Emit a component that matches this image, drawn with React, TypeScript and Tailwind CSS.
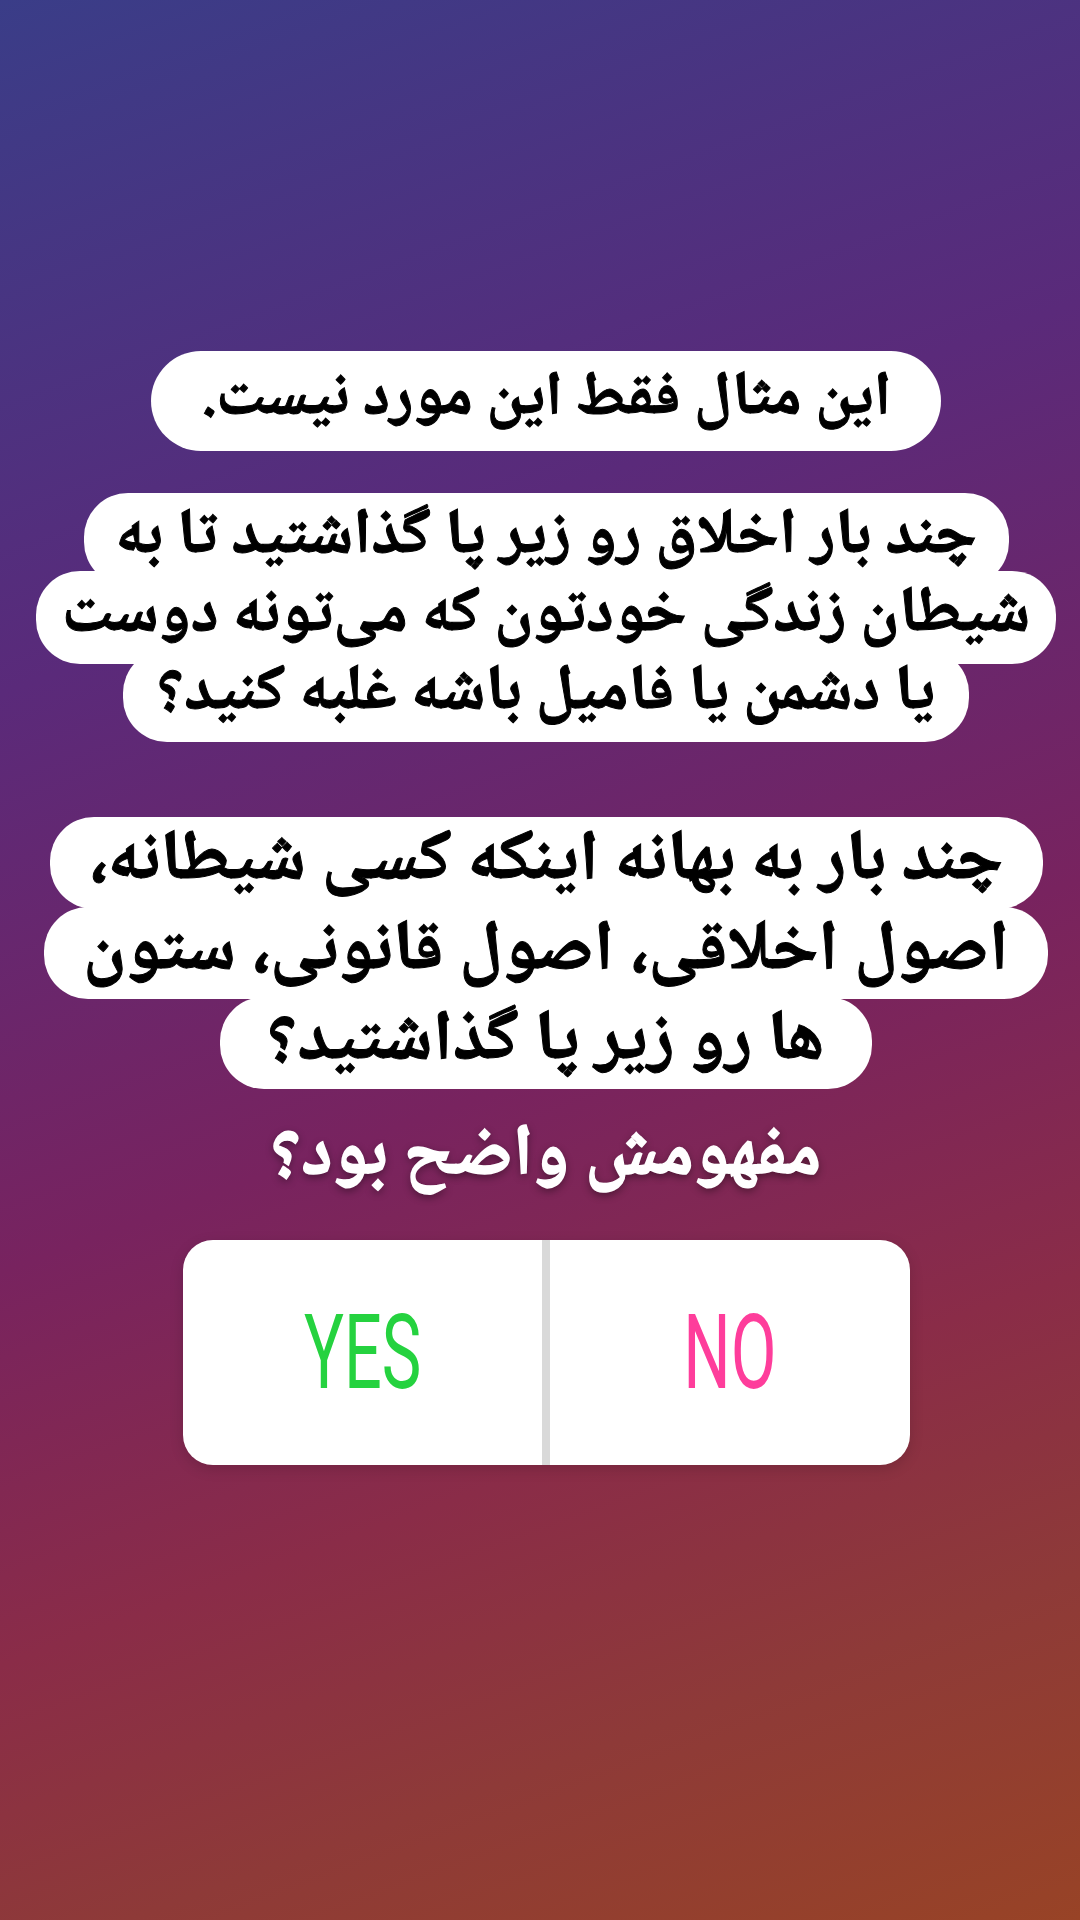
import React from "react";

type Line = { text: string; width: string };

// each line gets its own white pill, like the story text background
const Bubble: React.FC<{ lines: Line[]; lineClass: string }> = ({ lines, lineClass }) => {
  return (
    <div dir="rtl" className="flex flex-col items-center">
      {lines.map((l, i) => (
        <div
          key={i}
          className={`${l.width} ${lineClass} bg-white flex items-center justify-center`}
        >
          <span className="inline-block whitespace-nowrap leading-none text-black font-black [-webkit-text-stroke:1px_black]">
            {l.text}
          </span>
        </div>
      ))}
    </div>
  );
};

const secondBox: Line[] = [
  { text: "چند بار اخلاق رو زیر پا گذاشتید تا به", width: "w-[925px]" },
  { text: "شیطان زندگی خودتون که می\u200cتونه دوست", width: "w-[1020px]" },
  { text: "یا دشمن یا فامیل باشه غلبه کنید؟", width: "w-[846px]" },
];

const thirdBox: Line[] = [
  { text: "چند بار به بهانه اینکه کسی شیطانه،", width: "w-[993px]" },
  { text: "اصول اخلاقی، اصول قانونی، ستون", width: "w-[1004px]" },
  { text: "ها رو زیر پا گذاشتید؟", width: "w-[652px]" },
];

export default function App() {
  return (
    <div className="w-full h-[1920px] overflow-hidden bg-[linear-gradient(160deg,#3a3d88_0%,#5a2a7a_30%,#78235f_55%,#8a2c48_72%,#8e3a38_85%,#984326_100%)] flex flex-col items-center pl-[12px] font-['Noto_Naskh_Arabic','Noto_Sans_Arabic','DejaVu_Sans',sans-serif]">
      {/* first sentence */}
      <div
        dir="rtl"
        className="mt-[351px] w-[790px] h-[100px] rounded-[50px] bg-white flex items-center justify-center"
      >
        <span className="inline-block whitespace-nowrap leading-none text-black font-black text-[62px] [-webkit-text-stroke:1px_black]">
          این مثال فقط این مورد نیست.
        </span>
      </div>

      <div className="mt-[42px]">
        <Bubble
          lines={secondBox}
          lineClass="h-[93px] -mt-[15px] first:mt-0 rounded-[44px] text-[64px]"
        />
      </div>

      <div className="mt-[75px]">
        <Bubble
          lines={thirdBox}
          lineClass="h-[92px] -mt-[2px] first:mt-0 rounded-[44px] text-[71px]"
        />
      </div>

      {/* question */}
      <div
        dir="rtl"
        className="mt-[26px] h-[88px] flex items-center leading-none text-white font-black text-[72px] [-webkit-text-stroke:1.5px_white] [text-shadow:0_3px_8px_rgba(0,0,0,0.45)]"
      >
        مفهومش واضح بود؟
      </div>

      {/* poll */}
      <div className="mt-[37px] w-[727px] h-[225px] bg-white rounded-[30px] flex shadow-[0_4px_14px_rgba(0,0,0,0.15)] overflow-hidden">
        <div className="flex-1 flex items-center justify-center">
          <span className="inline-block scale-x-[0.64] font-['Roboto',sans-serif] font-normal text-[104px] leading-none text-[#25d23f]">
            YES
          </span>
        </div>
        <div className="w-[8px] bg-[#d9d9d9]" />
        <div className="flex-1 flex items-center justify-center">
          <span className="inline-block scale-x-[0.64] font-['Roboto',sans-serif] font-normal text-[104px] leading-none text-[#fe3d9b]">
            NO
          </span>
        </div>
      </div>
    </div>
  );
}
